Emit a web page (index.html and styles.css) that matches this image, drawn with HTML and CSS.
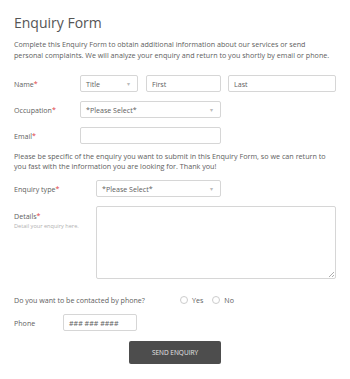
FILE: index.html
```html
<!DOCTYPE html>
<html lang="en">
<head>
    <meta charset="UTF-8">
    <title>Enquiry Form</title>
    <link rel="stylesheet" href="styles.css">
</head>
<body>
    <div class="form">
        <h1>Enquiry Form</h1>
        <p class="intro">Complete this Enquiry Form to obtain additional information about our services or send personal complaints. We will analyze your enquiry and return to you shortly by email or phone.</p>

        <!-- Name -->
        <div class="row row-name">
            <label class="label">Name<span class="req">*</span></label>
            <div class="field select title"><span>Title</span><span class="caret">&#9662;</span></div>
            <div class="field first">First</div>
            <div class="field last">Last</div>
        </div>

        <div class="row">
            <label class="label">Occupation<span class="req">*</span></label>
            <div class="field select wide"><span>*Please Select*</span><span class="caret">&#9662;</span></div>
        </div>

        <div class="row">
            <label class="label">Email<span class="req">*</span></label>
            <div class="field wide"></div>
        </div>

        <p class="note">Please be specific of the enquiry you want to submit in this Enquiry Form, so we can return to you fast with the information you are looking for. Thank you!</p>

        <div class="row">
            <label class="label label-long">Enquiry type<span class="req">*</span></label>
            <div class="field select enquiry"><span>*Please Select*</span><span class="caret">&#9662;</span></div>
        </div>

        <div class="row row-top">
            <div class="label label-long">
                <div>Details<span class="req">*</span></div>
                <div class="hint">Detail your enquiry here.</div>
            </div>
            <div class="field textarea">
                <svg class="grip" width="6" height="6" viewBox="0 0 6 6"><path d="M6 1 L1 6 M6 4 L4 6" stroke="#999" stroke-width="0.8"/></svg>
            </div>
        </div>

        <div class="row row-radio">
            <span class="question">Do you want to be contacted by phone?</span>
            <span class="radio"></span><span class="opt">Yes</span>
            <span class="radio"></span><span class="opt">No</span>
        </div>

        <div class="row">
            <label class="label label-short">Phone</label>
            <div class="field phone">### ### ####</div>
        </div>

        <div class="actions">
            <button class="send">SEND ENQUIRY</button>
        </div>
    </div>
</body>
</html>
```

FILE: styles.css
```css
* {
    margin: 0;
    padding: 0;
    box-sizing: border-box;
}
body {
    font-family: "Open Sans", Arial, sans-serif;
    background-color: #fff;
    color: #5e5e5e;
}
.form {
    width: 350px;
    padding: 12px 14px 0 14px;
}
h1 {
    font-size: 14px;
    font-weight: normal;
    color: #555;
    line-height: 22px;
}
.intro {
    font-size: 7.15px;
    line-height: 11px;
    margin-top: 5px;
}
.row {
    display: flex;
    align-items: center;
    margin-top: 9px;
    font-size: 7.1px;
}
.row-name {
    margin-top: 14px;
}
.label {
    width: 66px;
}
.label-long {
    width: 82px;
}
.label-short {
    width: 49px;
}
.req {
    color: #e0393e;
}
.field {
    height: 17px;
    border: 1px solid #d6d6d6;
    border-radius: 2px;
    padding: 0 5px;
    display: flex;
    align-items: center;
    color: #5e5e5e;
    background: #fff;
}
.select {
    justify-content: space-between;
}
.caret {
    color: #bbb;
    font-size: 6px;
    margin-right: 2px;
}
.title {
    width: 58px;
}
.first {
    width: 75px;
    margin-left: 8px;
}
.last {
    width: 108px;
    margin-left: 7px;
}
.wide {
    width: 141px;
}
.note {
    font-size: 7.2px;
    line-height: 10px;
    margin-top: 7px;
}
.enquiry {
    width: 125px;
}
.row-top {
    align-items: flex-start;
    margin-top: 9px;
}
.row-top .label {
    padding-top: 5px;
}
.hint {
    font-size: 5.6px;
    color: #b0b0b0;
    margin-top: 1px;
}
.textarea {
    width: 240px;
    height: 73px;
    position: relative;
}
.grip {
    position: absolute;
    right: 1px;
    bottom: 1px;
}
.row-radio {
    margin-top: 16px;
    height: 10px;
}
.question {
    width: 166px;
}
.radio {
    width: 8px;
    height: 8px;
    border: 1px solid #ccc;
    border-radius: 50%;
    margin-right: 4px;
}
.opt {
    margin-right: 9px;
}
.row-radio + .row {
    margin-top: 9px;
}
.phone {
    width: 74px;
}
.actions {
    display: flex;
    justify-content: center;
    margin-top: 10px;
}
.send {
    width: 92px;
    height: 23px;
    background-color: #4d4d4d;
    color: #e6e6e6;
    border: none;
    border-radius: 2px;
    font-family: "Open Sans", Arial, sans-serif;
    font-size: 6.5px;
}
```
